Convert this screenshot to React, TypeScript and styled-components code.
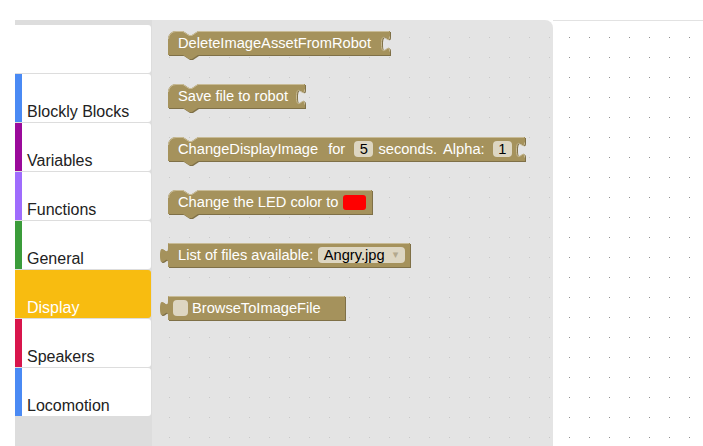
import React from "react";
import styled, { createGlobalStyle, css } from "styled-components";

const BLOCK = "#a5925c";
const BLOCK_DARK = "#7f7047";
const BLOCK_LIGHT = "#c8bb96";
const FIELD_BG = "#ddd6c2";

const Global = createGlobalStyle`
  html, body { margin: 0; padding: 0; background: #fff; }
  body { font-family: "Liberation Sans", Arial, sans-serif; overflow: hidden; }
`;

const dots = (bg: string, dot: string, ox: number, oy: number) => css`
  background-color: ${bg};
  background-image:
    linear-gradient(to bottom, ${bg} 0 ${oy}px, transparent ${oy}px ${oy + 1}px, ${bg} ${oy + 1}px),
    linear-gradient(to right, transparent 0 ${ox}px, ${dot} ${ox}px ${ox + 1}px, transparent ${ox + 1}px);
  background-size: 20px 20px;
`;

const Page = styled.div`
  width: 703px;
  height: 446px;
  display: flex;
  flex-direction: column;
  background: #fff;
`;

const TopGap = styled.div`
  height: 20px;
  flex: none;
`;

const Main = styled.div`
  flex: 1;
  min-height: 0;
  display: flex;
  padding-left: 15px;
`;

const Toolbox = styled.nav`
  width: 137px;
  flex: none;
  background: #ddd;
  padding-top: 5px;
  box-sizing: border-box;
  display: flex;
  flex-direction: column;
  gap: 1px;
`;

const Category = styled.div<{ $color?: string; $selected?: boolean }>`
  width: 136px;
  height: 48px;
  flex: none;
  box-sizing: border-box;
  background: ${(p) => (p.$selected ? p.$color : "#fff")};
  border-left: 7px solid ${(p) => p.$color ?? "#fff"};
  border-radius: 0 3px 3px 0;
  display: flex;
  align-items: flex-end;
  padding-left: 5px;
  font-size: 16px;
  line-height: 20px;
  color: ${(p) => (p.$selected ? "#fff" : "#222")};
`;

const Flyout = styled.div`
  width: 401px;
  flex: none;
  border-top-right-radius: 8px;
  ${dots("#e4e4e4", "#c8c8c8", 17, 17)}
  padding: 11px 0 0 16px;
  box-sizing: border-box;
  display: flex;
  flex-direction: column;
  align-items: flex-start;
  gap: 29px;
`;

const Workspace = styled.div`
  flex: 1;
  border-top: 1px solid #e2e2e2;
  ${dots("#fff", "#8f8f8f", 16, 16)}
`;

const BlockBox = styled.div<{ $w: number; $pad: number }>`
  position: relative;
  width: ${(p) => p.$w}px;
  height: 24px;
  flex: none;
  box-sizing: border-box;
  padding-left: ${(p) => p.$pad}px;
  display: flex;
  align-items: center;
  color: #fff;
  font-size: 14.67px;
  line-height: 24px;
  white-space: nowrap;
`;

const ShapeSvg = styled.svg`
  position: absolute;
  left: 0;
  top: 0;
  overflow: visible;
`;

const Content = styled.div`
  position: relative;
  display: flex;
  align-items: center;
`;

const Label = styled.span<{ $ml?: number }>`
  margin-left: ${(p) => p.$ml ?? 0}px;
`;

const Field = styled.span<{ $ml?: number }>`
  margin-left: ${(p) => p.$ml ?? 0}px;
  background: ${FIELD_BG};
  color: #000;
  border-radius: 4px;
  height: 16px;
  line-height: 16px;
  padding: 0 5.5px;
  display: inline-flex;
  align-items: center;
`;

const Arrow = styled.span`
  width: 8px;
  margin-left: 7px;
  text-align: center;
  font-size: 11px;
  color: #b3a98e;
  font-family: "DejaVu Sans", sans-serif;
`;

const Swatch = styled.span<{ $color: string; $ml?: number }>`
  margin-left: ${(p) => p.$ml ?? 0}px;
  width: 23px;
  height: 15px;
  border-radius: 3px;
  background: ${(p) => p.$color};
`;

const Check = styled.span`
  width: 15px;
  height: 16px;
  border-radius: 4px;
  background: ${FIELD_BG};
`;

type Kind = "statement" | "output";

const H = 24;

function pathFor(w: number, kind: Kind, notch: boolean) {
  const right = notch
    ? `V5 c0,10 -8,-8 -8,7.5 s8,-2.5 8,7.5 V${H}`
    : `V${H}`;
  if (kind === "statement") {
    return `M0,8 A8,8 0 0 1 8,0 H15 l6,4 h3 l6,-4 H${w} ${right} H30 l-6,4 h-3 l-6,-4 H0 Z`;
  }
  return `M0,0 H${w} ${right} H0 V20 c0,-10 -8,8 -8,-7.5 s8,2.5 8,-7.5 Z`;
}

function highlightFor(w: number, kind: Kind, notch: boolean) {
  let d =
    kind === "statement"
      ? `M0.5,8 A7.5,7.5 0 0 1 8,0.5 H15 l6,4 h3 l6,-4 H${w - 1}`
      : `M0.5,0.5 H${w - 1}`;
  if (notch) d += ` M${w - 0.5},5.5 c0,10 -8,-8 -8,7.5 s8,-2.5 8,7.5`;
  return d;
}

const Block: React.FC<{
  w: number;
  kind?: Kind;
  notch?: boolean;
  pad?: number;
  children: React.ReactNode;
}> = ({ w, kind = "statement", notch = false, pad = 10, children }) => {
  const d = pathFor(w, kind, notch);
  return (
    <BlockBox $w={w} $pad={pad}>
      <ShapeSvg width={w} height={H}>
        <path d={d} fill={BLOCK_DARK} transform="translate(1,1)" />
        <path d={d} fill={BLOCK} />
        <path d={highlightFor(w, kind, notch)} fill="none" stroke={BLOCK_LIGHT} strokeWidth={1} />
      </ShapeSvg>
      <Content>{children}</Content>
    </BlockBox>
  );
};

const categories: { name: string; color?: string; selected?: boolean }[] = [
  { name: "" },
  { name: "Blockly Blocks", color: "#4a8af4" },
  { name: "Variables", color: "#9b0a9b" },
  { name: "Functions", color: "#9f6cfd" },
  { name: "General", color: "#3b9c3a" },
  { name: "Display", color: "#f8bc10", selected: true },
  { name: "Speakers", color: "#d8154c" },
  { name: "Locomotion", color: "#4a8af4" },
];

export default function App() {
  return (
    <Page>
      <Global />
      <TopGap />
      <Main>
        <Toolbox>
          {categories.map((c, i) => (
            <Category key={i} $color={c.color} $selected={c.selected}>
              {c.name}
            </Category>
          ))}
        </Toolbox>
        <Flyout>
          <Block w={222} notch>
            <Label>DeleteImageAssetFromRobot</Label>
          </Block>
          <Block w={137} notch>
            <Label>Save file to robot</Label>
          </Block>
          <Block w={357} notch>
            <Label>ChangeDisplayImage</Label>
            <Label $ml={10}>for</Label>
            <Field $ml={9}>5</Field>
            <Label $ml={5}>seconds.</Label>
            <Label $ml={6}>Alpha:</Label>
            <Field $ml={8}>1</Field>
          </Block>
          <Block w={204}>
            <Label>Change the LED color to</Label>
            <Swatch $color="#ff0000" $ml={4} />
          </Block>
          <Block w={242} kind="output">
            <Label>List of files available:</Label>
            <Field $ml={5}>
              Angry.jpg
              <Arrow>▾</Arrow>
            </Field>
          </Block>
          <Block w={177} kind="output" pad={5}>
            <Check />
            <Label $ml={4}>BrowseToImageFile</Label>
          </Block>
        </Flyout>
        <Workspace />
      </Main>
    </Page>
  );
}
